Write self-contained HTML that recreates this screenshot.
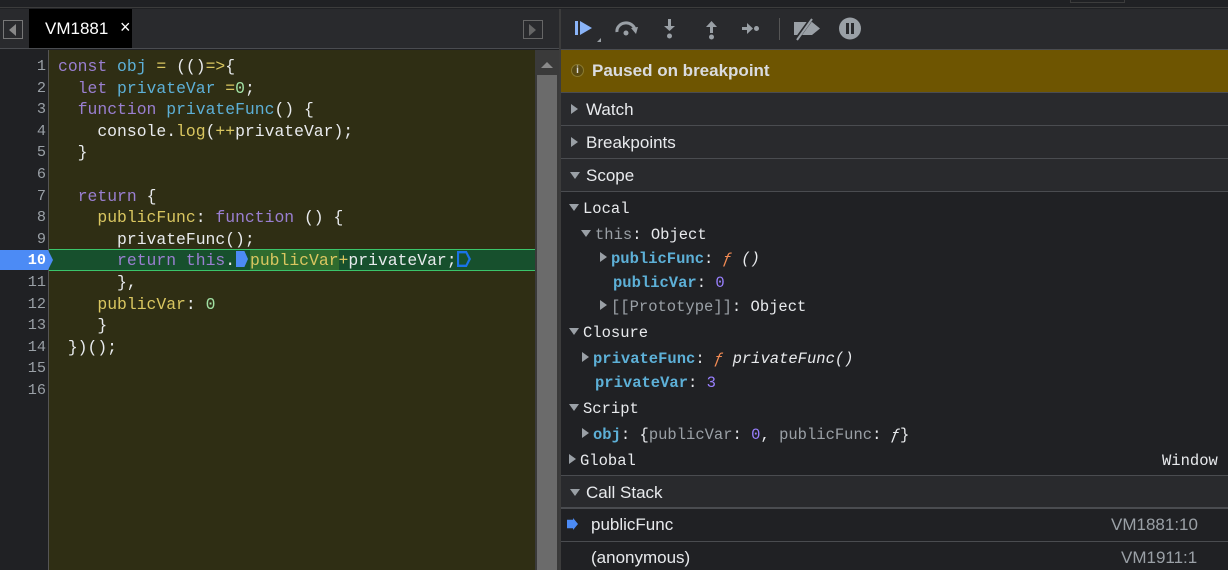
<!DOCTYPE html>
<html><head><meta charset="utf-8"><style>
*{margin:0;padding:0;box-sizing:border-box}
body{width:1228px;height:570px;overflow:hidden;background:#202124;font-family:"Liberation Sans",sans-serif;color:#e8eaed;position:relative}
.abs{position:absolute}
.mono{font-family:"Liberation Mono",monospace}
.code{font-size:16.4px;white-space:pre;height:21.6px;line-height:21.6px;left:58px}
.ln{font-size:15.2px;width:46px;text-align:right;height:21.6px;line-height:21.6px;left:0;color:#9aa0a6}
.k{color:#9a7fd1}.v{color:#5db0d7}.p{color:#d9c660}.n{color:#a1e0a3}.w{color:#e8eaed}
.hdr{left:561px;width:667px;background:#292a2d;border-bottom:1px solid #4a4c50;font-size:17px;color:#e8eaed}
.tri{display:inline-block;width:0;height:0;border-top:5px solid transparent;border-bottom:5px solid transparent;border-left:7px solid #9aa0a6;margin:0 8px 0 10px;vertical-align:1px}
.trd{display:inline-block;width:0;height:0;border-left:5px solid transparent;border-right:5px solid transparent;border-top:7px solid #9aa0a6;margin:0 6px 0 9px;vertical-align:2px}
.sc{font-size:15.5px;white-space:pre;line-height:24px;height:24px}
.st{display:inline-block;width:0;height:0;border-top:5px solid transparent;border-bottom:5px solid transparent;border-left:7px solid #9aa0a6;margin-right:4px;vertical-align:1px}
.sd{display:inline-block;width:0;height:0;border-left:5px solid transparent;border-right:5px solid transparent;border-top:7px solid #9aa0a6;margin-right:4px;vertical-align:2px}
.key{color:#5db0d7;font-weight:bold}
.f{color:#f28b54;font-style:italic}
.num{color:#9980ff}
.g{color:#9aa0a6}
</style></head><body>
<div class="abs" style="left:0;top:0;width:1228px;height:8px;background:#202124;border-bottom:1px solid #3c3c3c"></div>
<div class="abs" style="left:1070px;top:0;width:55px;height:3px;border:1px solid #3c3c3c;border-top:none"></div>
<div class="abs" style="left:0;top:9px;width:559px;height:40px;background:#292a2d;border-bottom:1px solid #4a4c50"></div>
<div class="abs" style="left:3px;top:20px;width:20px;height:19px;border:1px solid #777"></div>
<div class="abs" style="left:9px;top:24px;width:0;height:0;border-top:6px solid transparent;border-bottom:6px solid transparent;border-right:7px solid #888"></div>
<div class="abs" style="left:29px;top:9px;width:103px;height:39px;background:#000"></div>
<div class="abs" style="left:45px;top:19px;font-size:17px;color:#fff">VM1881</div>
<div class="abs" style="left:120px;top:17px;font-size:18px;color:#fff">×</div>
<div class="abs" style="left:523px;top:20px;width:20px;height:19px;border:1px solid #666"></div>
<div class="abs" style="left:529px;top:24px;width:0;height:0;border-top:6px solid transparent;border-bottom:6px solid transparent;border-left:7px solid #666"></div>
<div class="abs" style="left:0;top:50px;width:49px;height:520px;background:#202124;border-right:1px solid #555"></div>
<div class="abs" style="left:49px;top:50px;width:486px;height:520px;background:#2f2e14"></div>
<div class="abs" style="left:535px;top:50px;width:24px;height:520px;background:#3a3a3a"></div>
<div class="abs" style="left:537px;top:75px;width:20px;height:495px;background:#6b6b6b"></div>
<div class="abs" style="left:541px;top:62px;width:0;height:0;border-left:6px solid transparent;border-right:6px solid transparent;border-bottom:6px solid #8a8a8a"></div>
<div class="abs" style="left:559px;top:9px;width:2px;height:561px;background:#3c3c3c"></div>
<div class="abs" style="left:49px;top:249px;width:486px;height:22px;background:#17502d;border-top:1px solid #3bc46b;border-bottom:1px solid #3bc46b"></div>
<div class="abs" style="left:0;top:250px;width:48px;height:20px;background:#4c8bf5"></div>
<div class="abs" style="left:48px;top:250px;width:0;height:0;border-top:10px solid transparent;border-bottom:10px solid transparent;border-left:5px solid #4c8bf5"></div>
<div class="abs" style="left:250px;top:250px;width:89px;height:20px;background:#2f6b2e"></div>
<div class="abs" style="left:236px;top:251px;width:12px;height:16px;background:#4c8bf5;clip-path:polygon(0 0,70% 0,100% 50%,70% 100%,0 100%)"></div>
<div class="abs" style="left:457px;top:251px;width:14px;height:16px;background:#1a73e8;clip-path:polygon(0 0,70% 0,100% 50%,70% 100%,0 100%,0 0,15% 15%,15% 85%,62% 85%,82% 50%,62% 15%,15% 15%)"></div>
<div class="mono">
<div class="abs ln" style="top:56px">1</div><div class="abs ln" style="top:77.6px">2</div><div class="abs ln" style="top:99.2px">3</div><div class="abs ln" style="top:120.8px">4</div><div class="abs ln" style="top:142.4px">5</div><div class="abs ln" style="top:164px">6</div><div class="abs ln" style="top:185.6px">7</div><div class="abs ln" style="top:207.2px">8</div><div class="abs ln" style="top:228.8px">9</div><div class="abs ln" style="top:250.4px;color:#fff;font-weight:bold">10</div><div class="abs ln" style="top:272px">11</div><div class="abs ln" style="top:293.6px">12</div><div class="abs ln" style="top:315.2px">13</div><div class="abs ln" style="top:336.8px">14</div><div class="abs ln" style="top:358.4px">15</div><div class="abs ln" style="top:380px">16</div>
<div class="abs code" style="top:56px"><span class="k">const</span> <span class="v">obj</span> <span class="p">=</span> <span class="w">(()</span><span class="p">=&gt;</span><span class="w">{</span></div>
<div class="abs code" style="top:77.6px">  <span class="k">let</span> <span class="v">privateVar</span> <span class="p">=</span><span class="n">0</span><span class="w">;</span></div>
<div class="abs code" style="top:99.2px">  <span class="k">function</span> <span class="v">privateFunc</span><span class="w">() {</span></div>
<div class="abs code" style="top:120.8px"><span class="w">    console.</span><span class="p">log</span><span class="w">(</span><span class="p">++</span><span class="w">privateVar);</span></div>
<div class="abs code" style="top:142.4px"><span class="w">  }</span></div>
<div class="abs code" style="top:185.6px">  <span class="k">return</span> <span class="w">{</span></div>
<div class="abs code" style="top:207.2px">    <span class="p">publicFunc</span><span class="w">:</span> <span class="k">function</span> <span class="w">() {</span></div>
<div class="abs code" style="top:228.8px"><span class="w">      privateFunc();</span></div>
<div class="abs code" style="top:250.4px">      <span class="k">return</span> <span class="k">this</span><span class="w">.</span></div>
<div class="abs code" style="top:250.4px;left:250px"><span class="p">publicVar</span><span class="p">+</span><span class="w">privateVar;</span></div>
<div class="abs code" style="top:272px"><span class="w">      },</span></div>
<div class="abs code" style="top:293.6px">    <span class="p">publicVar</span><span class="w">:</span> <span class="n">0</span></div>
<div class="abs code" style="top:315.2px"><span class="w">    }</span></div>
<div class="abs code" style="top:336.8px"><span class="w"> })();</span></div>
</div>
<div class="abs" style="left:561px;top:9px;width:667px;height:40px;background:#292a2d"></div>
<svg class="abs" style="left:572px;top:16px" width="240" height="28" viewBox="0 0 240 28">
<rect x="3" y="5" width="3" height="14" fill="#8ab4f8"/><path d="M8 5 L20 12 L8 19Z" fill="#8ab4f8"/><path d="M25 26 L29 22 L29 26Z" fill="#9aa0a6"/>
<path d="M45 16 A9 8 0 0 1 63 14" stroke="#9aa0a6" stroke-width="3" fill="none"/><path d="M59 12 L66 11 L64 18Z" fill="#9aa0a6"/><circle cx="54" cy="17" r="2.5" fill="#9aa0a6"/>
<rect x="96" y="3" width="3" height="8" fill="#9aa0a6"/><path d="M92 10 L103 10 L97.5 15Z" fill="#9aa0a6"/><circle cx="97.5" cy="20" r="2.5" fill="#9aa0a6"/>
<rect x="138" y="10" width="3" height="7" fill="#9aa0a6"/><path d="M134 11 L145 11 L139.5 5Z" fill="#9aa0a6"/><circle cx="139.5" cy="21" r="2.5" fill="#9aa0a6"/>
<rect x="170" y="11" width="6" height="3" fill="#9aa0a6"/><path d="M175 7 L181 12.5 L175 18Z" fill="#9aa0a6"/><circle cx="184.5" cy="12.5" r="2.5" fill="#9aa0a6"/>
<rect x="207" y="2" width="1" height="22" fill="#555"/>
</svg>
<svg class="abs" style="left:790px;top:16px" width="80" height="28" viewBox="0 0 80 28">
<path d="M4 6 L22 6 L30 12.5 L22 19 L4 19Z" fill="#9aa0a6"/><path d="M6 24 L22 2" stroke="#292a2d" stroke-width="4"/><path d="M7 24 L22 3" stroke="#9aa0a6" stroke-width="2"/>
<circle cx="60" cy="12.5" r="11" fill="#9aa0a6"/><rect x="56" y="7" width="3" height="11" fill="#292a2d"/><rect x="61" y="7" width="3" height="11" fill="#292a2d"/>
</svg>
<div class="abs" style="left:561px;top:49px;width:667px;height:44px;background:#6e5501;border-top:1px solid #4a4c50;border-bottom:1px solid #4a4c50"></div>
<div class="abs" style="left:571px;top:64px;width:13px;height:13px;border-radius:50%;background:#5a4a10;border:1px solid #8a7a30;color:#ddd;font-size:10px;text-align:center;line-height:11px;font-weight:bold">i</div>
<div class="abs" style="left:592px;top:61px;font-size:17px;font-weight:bold;color:#dadce0">Paused on breakpoint</div>
<div class="abs hdr" style="top:93px;height:33px;line-height:33px"><span class="tri"></span>Watch</div>
<div class="abs hdr" style="top:126px;height:33px;line-height:33px"><span class="tri"></span>Breakpoints</div>
<div class="abs hdr" style="top:159px;height:33px;line-height:33px"><span class="trd"></span>Scope</div>
<div class="mono">
<div class="abs sc" style="left:569px;top:197px"><span class="sd"></span>Local</div>
<div class="abs sc" style="left:581px;top:223px"><span class="sd"></span><span class="g">this</span>: Object</div>
<div class="abs sc" style="left:600px;top:247px"><span class="st"></span><span class="key">publicFunc</span>: <span class="f">ƒ</span> <span style="font-style:italic">()</span></div>
<div class="abs sc" style="left:613px;top:271px"><span class="key">publicVar</span>: <span class="num">0</span></div>
<div class="abs sc" style="left:600px;top:295px"><span class="st"></span><span class="g">[[Prototype]]</span>: Object</div>
<div class="abs sc" style="left:569px;top:321px"><span class="sd"></span>Closure</div>
<div class="abs sc" style="left:582px;top:347px"><span class="st"></span><span class="key">privateFunc</span>: <span class="f">ƒ</span> <span style="font-style:italic">privateFunc()</span></div>
<div class="abs sc" style="left:595px;top:371px"><span class="key">privateVar</span>: <span class="num">3</span></div>
<div class="abs sc" style="left:569px;top:397px"><span class="sd"></span>Script</div>
<div class="abs sc" style="left:582px;top:423px"><span class="st"></span><span class="key">obj</span>: {<span class="g">publicVar</span>: <span class="num">0</span>, <span class="g">publicFunc</span>: <span style="font-style:italic">ƒ</span>}</div>
<div class="abs sc" style="left:569px;top:449px"><span class="st"></span>Global</div>
<div class="abs sc" style="left:1162px;top:449px">Window</div>
</div>
<div class="abs" style="left:561px;top:475px;width:667px;height:1px;background:#4a4c50"></div>
<div class="abs hdr" style="top:476px;height:33px;line-height:33px;border-bottom:2px solid #4a4c50"><span class="trd"></span>Call Stack</div>
<div class="abs" style="left:567px;top:518px;width:11px;height:12px;background:#4c8bf5;clip-path:polygon(0 15%,55% 15%,55% 0,100% 50%,55% 100%,55% 85%,0 85%)"></div>
<div class="abs" style="left:591px;top:515px;font-size:17px">publicFunc</div>
<div class="abs" style="left:1111px;top:515px;font-size:17px;color:#9aa0a6">VM1881:10</div>
<div class="abs" style="left:561px;top:541px;width:667px;height:1px;background:#4a4c50"></div>
<div class="abs" style="left:591px;top:548px;font-size:17px">(anonymous)</div>
<div class="abs" style="left:1121px;top:548px;font-size:17px;color:#9aa0a6">VM1911:1</div>
</body></html>
